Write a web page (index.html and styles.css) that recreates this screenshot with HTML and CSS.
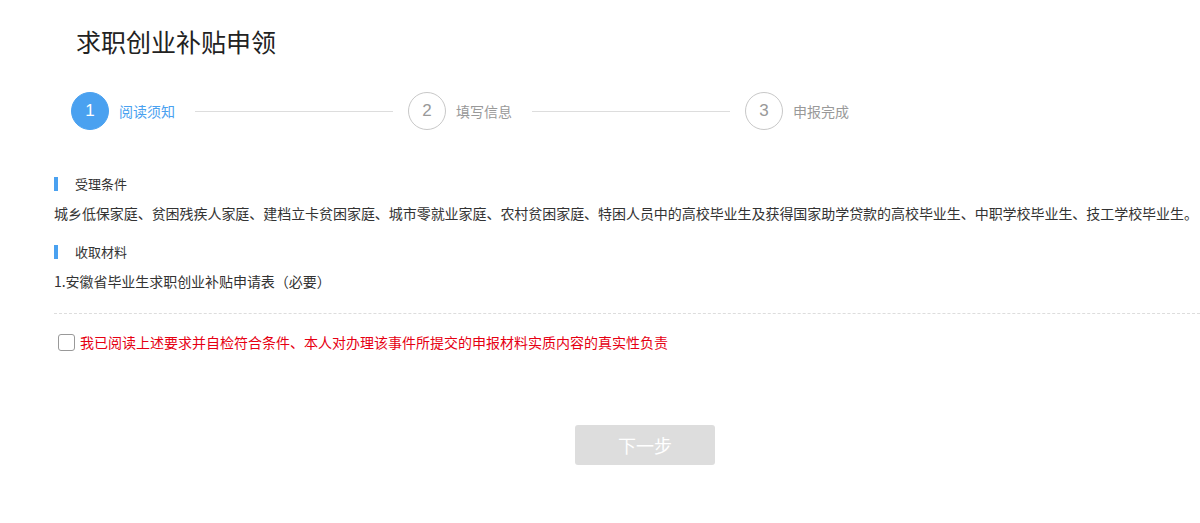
FILE: index.html
```html
<!DOCTYPE html>
<html lang="zh-CN">
<head>
    <meta charset="UTF-8">
    <meta name="viewport" content="width=device-width, initial-scale=1.0">
    <title>求职创业补贴申领</title>
    <link rel="stylesheet" href="styles.css">
</head>
<body>
    <div class="page">
        <h1 class="title">求职创业补贴申领</h1>

        <div class="steps">
            <div class="step active">
                <span class="step-num">1</span>
                <span class="step-text">阅读须知</span>
            </div>
            <div class="step-line"></div>
            <div class="step">
                <span class="step-num">2</span>
                <span class="step-text">填写信息</span>
            </div>
            <div class="step-line"></div>
            <div class="step">
                <span class="step-num">3</span>
                <span class="step-text">申报完成</span>
            </div>
        </div>

        <div class="section">
            <div class="section-title">受理条件</div>
            <p class="section-body">城乡低保家庭、贫困残疾人家庭、建档立卡贫困家庭、城市零就业家庭、农村贫困家庭、特困人员中的高校毕业生及获得国家助学贷款的高校毕业生、中职学校毕业生、技工学校毕业生。</p>
        </div>

        <div class="section">
            <div class="section-title">收取材料</div>
            <p class="section-body">1.安徽省毕业生求职创业补贴申请表（必要）</p>
        </div>

        <div class="divider"></div>

        <label class="agree">
            <input type="checkbox" class="agree-box">
            <span class="agree-text">我已阅读上述要求并自检符合条件、本人对办理该事件所提交的申报材料实质内容的真实性负责</span>
        </label>

        <div class="actions">
            <button class="next" disabled>下一步</button>
        </div>
    </div>
</body>
</html>
```

FILE: styles.css
```css
body {
    margin: 0;
    font-family: "Noto Sans CJK SC", "Liberation Sans", sans-serif;
    background: #ffffff;
    color: #333333;
}

.page {
    padding-left: 54px;
}

.title {
    margin: 24px 0 0 22px;
    font-size: 25px;
    font-weight: normal;
    line-height: 34px;
    color: #222222;
}

.steps {
    display: flex;
    align-items: center;
    margin: 34px 0 0 17px;
}

.step {
    display: flex;
    align-items: center;
}

.step-num {
    width: 36px;
    height: 36px;
    border: 1px solid #c8c8c8;
    border-radius: 50%;
    display: flex;
    justify-content: center;
    align-items: center;
    font-family: "Liberation Sans", sans-serif;
    font-size: 17px;
    color: #999999;
}

.step-text {
    margin-left: 10px;
    font-size: 14px;
    color: #999999;
}

.step.active .step-num {
    background: #4aa1f0;
    border-color: #4aa1f0;
    color: #ffffff;
}

.step.active .step-text {
    color: #4aa1f0;
}

.step-line {
    width: 198px;
    height: 1px;
    background: #dddddd;
    margin: 0 15px 0 20px;
}

.section {
    margin-top: 45px;
}

.section + .section {
    margin-top: 20px;
}

.section-title {
    display: flex;
    align-items: center;
    font-size: 13px;
    line-height: 18px;
    color: #333333;
}

.section-title::before {
    content: "";
    width: 4px;
    height: 14px;
    background: #4aa1f0;
    margin-right: 17px;
}

.section-body {
    margin: 10px 0 0 0;
    font-size: 14px;
    line-height: 20px;
    letter-spacing: -0.05px;
    color: #333333;
    white-space: nowrap;
}

.divider {
    margin-top: 22px;
    border-top: 1px dashed #dddddd;
}

.agree {
    display: flex;
    align-items: center;
    margin: 18px 0 0 4px;
    cursor: pointer;
}

.agree-box {
    appearance: none;
    width: 17px;
    height: 17px;
    margin: 0 5px 0 0;
    border: 1px solid #999999;
    border-radius: 3px;
    background: #ffffff;
}

.agree-text {
    font-size: 14px;
    color: #e60012;
}

.actions {
    display: flex;
    margin-top: 73px;
    padding-left: 521px;
}

.next {
    width: 140px;
    height: 40px;
    border: none;
    border-radius: 3px;
    background: #dddddd;
    color: #ffffff;
    font-family: "Noto Sans CJK SC", sans-serif;
    font-size: 18px;
}
```
